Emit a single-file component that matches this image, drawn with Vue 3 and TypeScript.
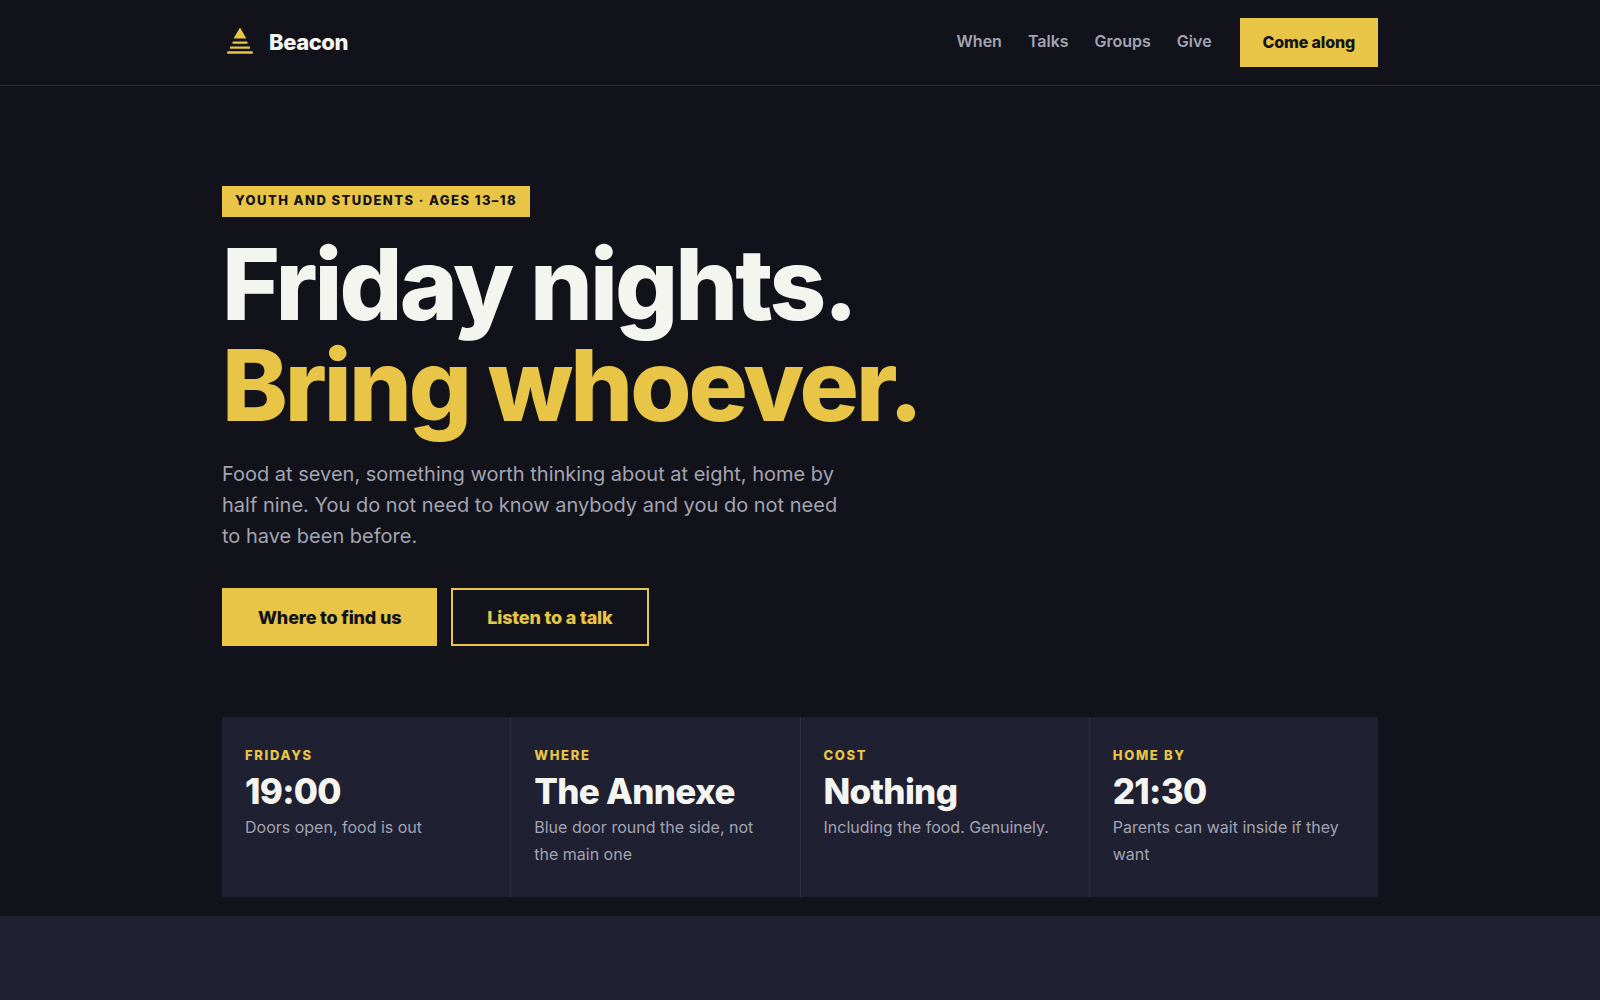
<script setup lang="ts">
interface Fact {
  label: string
  value: string
  note: string
}

const links: string[] = ['When', 'Talks', 'Groups', 'Give']

const facts: Fact[] = [
  { label: 'Fridays', value: '19:00', note: 'Doors open, food is out' },
  { label: 'Where', value: 'The Annexe', note: 'Blue door round the side, not the main one' },
  { label: 'Cost', value: 'Nothing', note: 'Including the food. Genuinely.' },
  { label: 'Home by', value: '21:30', note: 'Parents can wait inside if they want' },
]
</script>

<template>
  <div class="page">
    <header class="header">
      <div class="wrap bar">
        <a class="brand" href="#">
          <svg class="mark" viewBox="0 0 36 36" aria-hidden="true">
            <path d="M18 2.500 24.400 13.600H11.600Z" />
            <rect x="10.500" y="16.500" width="15" height="2.300" rx="0.600" />
            <rect x="8" y="21.500" width="20" height="2.300" rx="0.600" />
            <rect x="5.200" y="26.300" width="25.600" height="2.500" rx="0.600" />
          </svg>
          <span>Beacon</span>
        </a>
        <nav class="nav" aria-label="Main">
          <div class="links">
            <a v-for="link in links" :key="link" class="link" :href="`#${link.toLowerCase()}`">{{ link }}</a>
          </div>
          <a class="button small" href="#come">Come along</a>
        </nav>
      </div>
    </header>

    <main>
      <section class="wrap hero">
        <p class="badge">Youth and students · Ages 13–18</p>
        <h1 class="title">Friday nights.<br /><em>Bring whoever.</em></h1>
        <p class="lead">
          Food at seven, something worth thinking about at eight, home by half nine. You do not need
          to know anybody and you do not need to have been before.
        </p>
        <div class="actions">
          <a class="button" href="#find">Where to find us</a>
          <a class="button outline" href="#talks">Listen to a talk</a>
        </div>
        <dl class="facts">
          <div v-for="fact in facts" :key="fact.label" class="fact">
            <dt class="label">{{ fact.label }}</dt>
            <dd class="value">{{ fact.value }}</dd>
            <dd class="note">{{ fact.note }}</dd>
          </div>
        </dl>
      </section>
      <section class="band"></section>
    </main>
  </div>
</template>

<style>
body {
  margin: 0;
  background: #12131a;
}
</style>

<style scoped>
.page {
  min-height: 100vh;
  display: flex;
  flex-direction: column;
  background: #12131a;
  color: #f5f5f0;
  font-family: Inter, 'Liberation Sans', sans-serif;
  font-size: 17px;
  line-height: 27px;
}

main {
  flex: 1;
  display: flex;
  flex-direction: column;
}

.wrap {
  box-sizing: border-box;
  width: 100%;
  max-width: 1204px;
  margin: 0 auto;
  padding: 0 24px;
}

.header {
  border-bottom: 1px solid #292a33;
}

.bar {
  display: flex;
  align-items: center;
  justify-content: space-between;
  padding-top: 18px;
  padding-bottom: 18px;
}

a {
  text-decoration: none;
}

.brand {
  display: flex;
  align-items: center;
  gap: 11px;
  color: #f5f5f0;
  font-size: 22px;
  font-weight: 800;
  letter-spacing: -0.02em;
}

.mark {
  width: 36px;
  height: 36px;
  fill: #e8c547;
}

.nav {
  display: flex;
  align-items: center;
  gap: 28px;
}

.links {
  display: flex;
  gap: 26px;
  padding-bottom: 2px;
}

.link {
  color: #a3a4b3;
  font-size: 16px;
  font-weight: 600;
}

.button {
  display: flex;
  align-items: center;
  box-sizing: border-box;
  height: 58px;
  padding: 0 36px;
  background: #e8c547;
  color: #12131a;
  font-size: 18px;
  font-weight: 800;
  letter-spacing: -0.01em;
}

.small {
  height: 49px;
  padding: 0 23px;
  font-size: 16px;
}

.outline {
  padding: 0 34px;
  border: 2px solid #e8c547;
  background: transparent;
  color: #e8c547;
}

.hero {
  display: flex;
  flex-direction: column;
  align-items: flex-start;
  padding-top: 100px;
  padding-bottom: 19px;
}

.badge {
  margin: 0;
  padding: 0 13px 2px;
  background: #e8c547;
  color: #12131a;
  font-size: 13px;
  font-weight: 800;
  line-height: 29px;
  letter-spacing: 0.11em;
  text-transform: uppercase;
}

.title {
  margin: 17px 0 0;
  font-size: 99px;
  font-weight: 800;
  line-height: 101px;
  letter-spacing: -0.03em;
}

.title em {
  color: #e8c547;
  font-style: normal;
}

.lead {
  max-width: 624px;
  margin: 23px 0 0;
  color: #a3a4b3;
  font-size: 20px;
  line-height: 31px;
}

.actions {
  display: flex;
  flex-wrap: wrap;
  gap: 14px;
  margin-top: 36px;
}

.facts {
  align-self: stretch;
  display: grid;
  grid-template-columns: repeat(4, 1fr);
  gap: 1px;
  margin: 71px 0 0;
  background: #30313f;
}

.fact {
  padding: 25px 23px 29px;
  background: #1f2031;
}

.label {
  color: #e8c547;
  font-size: 13px;
  font-weight: 800;
  letter-spacing: 0.13em;
  text-transform: uppercase;
}

.value {
  margin: 3px 0 0;
  font-size: 35px;
  font-weight: 800;
  line-height: 38px;
  letter-spacing: -0.02em;
}

.note {
  margin: 4px 0 0;
  color: #a3a4b3;
  font-size: 16px;
}

.band {
  flex: 1;
  min-height: 85px;
  background: #1f2031;
}

@media (max-width: 900px) {
  .facts {
    grid-template-columns: repeat(2, 1fr);
  }

  .title {
    font-size: 60px;
    line-height: 62px;
  }
}
</style>
